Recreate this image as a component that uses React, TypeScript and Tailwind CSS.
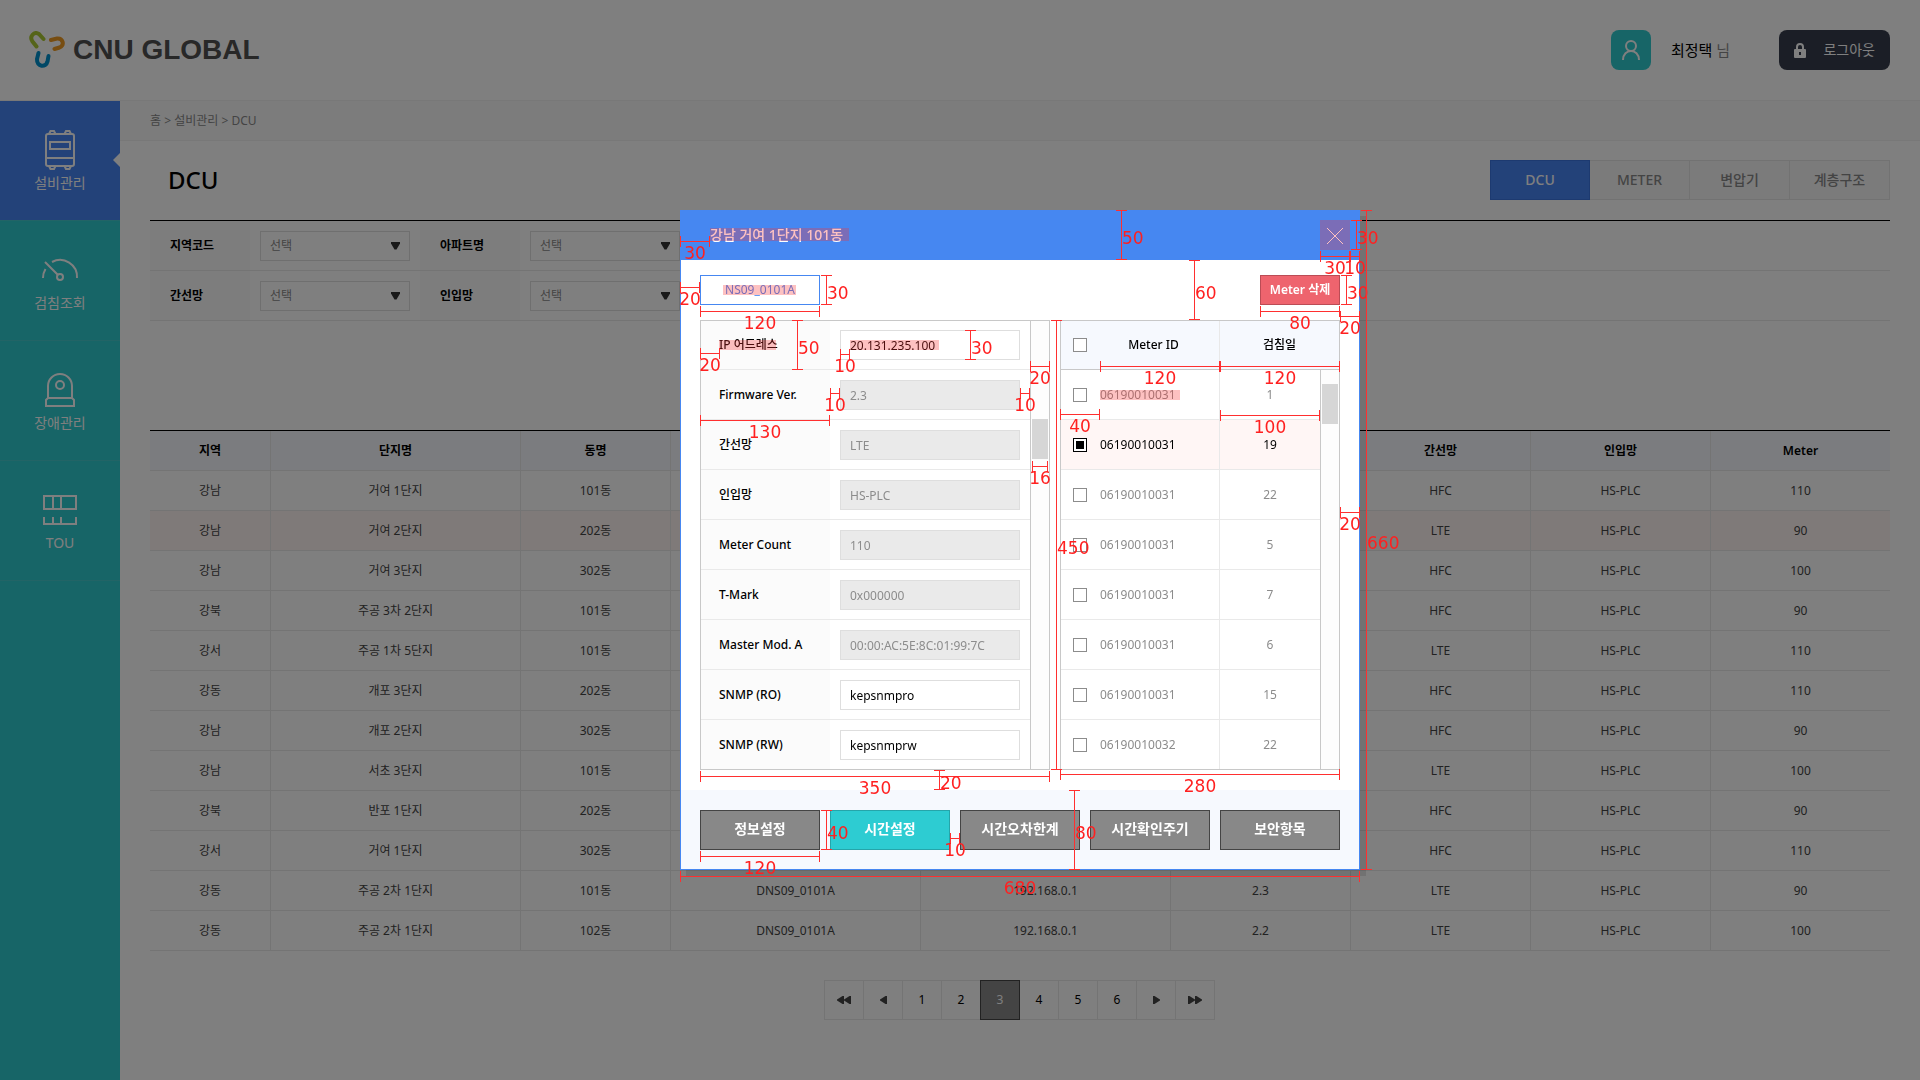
import React from 'react';

const menu = [
  { label: '설비관리', icon: 'cabinet', active: true },
  { label: '검침조회', icon: 'gauge', active: false },
  { label: '장애관리', icon: 'alarm', active: false },
  { label: 'TOU', icon: 'tou', active: false },
];

const tabs = ['DCU', 'METER', '변압기', '계층구조'];

const filterRows = [
  ['지역코드', '아파트명'],
  ['간선망', '인입망'],
];

const columns = ['지역', '단지명', '동명', 'DCU ID', 'IP 어드레스', 'Firmware Ver.', '간선망', '인입망', 'Meter'];

const rows = [
  ['강남', '거여 1단지', '101동', 'DNS09_0101A', '192.168.0.1', '2.3', 'HFC', 'HS-PLC', '110'],
  ['강남', '거여 2단지', '202동', 'DNS09_0101A', '192.168.0.1', '2.3', 'LTE', 'HS-PLC', '90'],
  ['강남', '거여 3단지', '302동', 'DNS09_0101A', '192.168.0.1', '2.3', 'HFC', 'HS-PLC', '100'],
  ['강북', '주공 3차 2단지', '101동', 'DNS09_0101A', '192.168.0.1', '2.3', 'HFC', 'HS-PLC', '90'],
  ['강서', '주공 1차 5단지', '101동', 'DNS09_0101A', '192.168.0.1', '2.3', 'LTE', 'HS-PLC', '110'],
  ['강동', '개포 3단지', '202동', 'DNS09_0101A', '192.168.0.1', '2.3', 'HFC', 'HS-PLC', '110'],
  ['강남', '개포 2단지', '302동', 'DNS09_0101A', '192.168.0.1', '2.3', 'HFC', 'HS-PLC', '90'],
  ['강남', '서초 3단지', '101동', 'DNS09_0101A', '192.168.0.1', '2.3', 'LTE', 'HS-PLC', '100'],
  ['강북', '반포 1단지', '202동', 'DNS09_0101A', '192.168.0.1', '2.3', 'HFC', 'HS-PLC', '90'],
  ['강서', '거여 1단지', '302동', 'DNS09_0101A', '192.168.0.1', '2.3', 'HFC', 'HS-PLC', '110'],
  ['강동', '주공 2차 1단지', '101동', 'DNS09_0101A', '192.168.0.1', '2.3', 'LTE', 'HS-PLC', '90'],
  ['강동', '주공 2차 1단지', '102동', 'DNS09_0101A', '192.168.0.1', '2.2', 'LTE', 'HS-PLC', '100'],
];

const fields = [
  { label: 'IP 어드레스', value: '20.131.235.100', disabled: false },
  { label: 'Firmware Ver.', value: '2.3', disabled: true },
  { label: '간선망', value: 'LTE', disabled: true },
  { label: '인입망', value: 'HS-PLC', disabled: true },
  { label: 'Meter Count', value: '110', disabled: true },
  { label: 'T-Mark', value: '0x000000', disabled: true },
  { label: 'Master Mod. A', value: '00:00:AC:5E:8C:01:99:7C', disabled: true },
  { label: 'SNMP (RO)', value: 'kepsnmpro', disabled: false },
  { label: 'SNMP (RW)', value: 'kepsnmprw', disabled: false },
];

const meters = [
  ['06190010031', '1'],
  ['06190010031', '19'],
  ['06190010031', '22'],
  ['06190010031', '5'],
  ['06190010031', '7'],
  ['06190010031', '6'],
  ['06190010031', '15'],
  ['06190010032', '22'],
];

const actions = ['정보설정', '시간설정', '시간오차한계', '시간확인주기', '보안항목'];

// Dimension lines, measured from the dialog's top left corner: [x, y, length]
const horizontal = [
  [0, 31, 30], [0, 77, 20], [20, 101, 120], [20, 143, 20], [160, 144, 10], [350, 156, 20],
  [150, 183, 10], [340, 183, 10], [20, 210, 130], [352, 256, 16], [640, 46, 30], [670, 46, 10],
  [580, 101, 80], [660, 106, 20], [420, 156, 120], [540, 156, 120], [380, 204, 40], [540, 205, 100],
  [660, 302, 20], [380, 564, 280], [20, 566, 350], [20, 646, 120], [270, 628, 10], [0, 666, 680],
];
const vertical = [
  [146, 65, 30], [117, 110, 50], [290, 120, 30], [376, 110, 450], [441, 0, 50], [514, 50, 60],
  [676, 10, 30], [666, 65, 30], [686, 0, 660], [259, 560, 20], [146, 600, 40], [394, 580, 80],
];
// Highlighted areas: [x, y, width, height]
const marks = [
  [30, 18, 139, 13], [43, 75, 73, 10], [39, 130, 57, 10], [170, 130, 89, 10], [420, 180, 80, 10], [640, 10, 30, 30],
];

function Logo() {
  return (
    <a href="#" className="flex items-center gap-2" aria-label="CNU GLOBAL">
      <svg width="36" height="38" viewBox="0 0 36 38" fill="none" strokeWidth="4" strokeLinecap="round" aria-hidden="true">
        <path d="M7.500 15.500 3.500 10.500C0 5.500 5 0 10 3l4.500 5" stroke="#abc832" />
        <path d="m22 9 6-1.500c6-.5 8 6.500 2.500 9l-5 1.500" stroke="#ef9a22" />
        <path d="m9.500 22-1.500 6c-.5 8 9 9 10.500 2.500L19.500 25" stroke="#0090cc" />
      </svg>
      <span className="font-['Liberation_Sans',sans-serif] text-[28px] leading-8 font-bold text-[#505050]">CNU GLOBAL</span>
    </a>
  );
}

function MenuIcon({ name }: { name: string }) {
  return (
    <svg width="40" height="40" viewBox="0 0 40 40" fill="none" stroke="currentColor" strokeWidth="2" aria-hidden="true">
      {name === 'cabinet' && (
        <>
          <rect x="6" y="4" width="28" height="32" rx="2" />
          <path d="M10 12h20v7H10zM6 28h28M9 4l1.500-3h3.500l1.500 3M24.500 4 26 1h3.500L31 4M9 36l1.500 3h3.500l1.500-3M24.500 36l1.500 3h3.500l1.500-3" />
        </>
      )}
      {name === 'gauge' && (
        <>
          <circle cx="20" cy="27" r="3" />
          <path d="M5 12l13 13M12 12a17 17 0 0 1 25 16M3 28a17 17 0 0 1 2.500-9" />
        </>
      )}
      {name === 'alarm' && (
        <>
          <circle cx="20" cy="15" r="4" />
          <path d="M8 28V16a12 12 0 0 1 24 0v12M8 28h24l2 2v6H6v-6z" />
        </>
      )}
      {name === 'tou' && <path d="M4 6h32v13H4zM13 6v13M21 6v13M4 27v7h32v-7M13 27v7M21 27v7" />}
    </svg>
  );
}

function Arrows({ count, back }: { count: number; back?: boolean }) {
  return (
    <span className={back ? 'flex rotate-180' : 'flex'}>
      {Array.from({ length: count }, (_, i) => (
        <svg key={i} width="7" height="8" viewBox="0 0 7 8" fill="#444" aria-hidden="true">
          <path d="M0 0h1.500L7 3.500v1L1.500 8H0z" />
        </svg>
      ))}
    </span>
  );
}

function Page() {
  return (
    <div className="flex min-h-screen flex-col bg-white">
      <header className="flex h-[101px] items-center justify-between border-b border-[#f0f0f0] pr-[30px] pl-[29px]">
        <Logo />
        <div className="flex items-center">
          <span className="flex size-10 items-center justify-center rounded-lg bg-[#2ecace]">
            <svg width="20" height="20" viewBox="0 0 20 20" fill="none" stroke="white" strokeWidth="2" aria-hidden="true">
              <circle cx="10" cy="6" r="5" />
              <path d="M2 20c0-12 16-12 16 0" />
            </svg>
          </span>
          <span className="ml-5 text-[15px] text-black">
            최정택 <span className="text-[#888]">님</span>
          </span>
          <button type="button" className="ml-[49px] flex h-10 w-[111px] items-center justify-between rounded-lg bg-[#363c4c] px-[15px] text-sm text-white">
            <svg width="12" height="15" viewBox="0 0 12 15" aria-hidden="true">
              <path d="M3 7V4a3 3 0 0 1 6 0v3" fill="none" stroke="white" strokeWidth="2" />
              <path d="M1 6h10a1 1 0 0 1 1 1v7a1 1 0 0 1-1 1H1a1 1 0 0 1-1-1V7a1 1 0 0 1 1-1zm4 3v3h2V9z" fill="white" fillRule="evenodd" />
            </svg>
            로그아웃
          </button>
        </div>
      </header>
      <div className="flex flex-1">
        <nav className="w-[120px] shrink-0 bg-[#2ecace] text-white">
          {menu.map((item) => (
            <a
              key={item.label}
              href="#"
              className={
                'relative flex h-[120px] flex-col items-center border-b border-[#45c8cc] pt-[29px] ' +
                (item.active ? 'bg-[#4684f2]' : '')
              }
            >
              <MenuIcon name={item.icon} />
              <span className="mt-px text-sm leading-6">{item.label}</span>
              {item.active && (
                <svg className="absolute top-[52px] right-0" width="7" height="14" viewBox="0 0 7 14" aria-hidden="true">
                  <path d="M7 0v14L0 7z" fill="white" />
                </svg>
              )}
            </a>
          ))}
        </nav>
        <div className="min-w-0 flex-1">
          <div className="flex h-10 items-center border-b border-[#f0f0f0] bg-[#f9f9f9] px-[30px] text-xs text-[#888]">
            홈 &gt; 설비관리 &gt; DCU
          </div>
          <main className="px-[30px]">
            <div className="mb-px flex h-[78px] items-center justify-between pl-[18px]">
              <h1 className="text-2xl font-medium text-black">DCU</h1>
              <div className="grid w-[400px] grid-cols-4">
                {tabs.map((t, i) => (
                  <button
                    key={t}
                    type="button"
                    className={
                      'h-10 border-y border-r text-sm font-medium ' +
                      (i === 0 ? 'border-l border-[#3a74e0] bg-[#4684f2] text-white' : 'border-[#e4e4e4] bg-[#f7f7f7] text-[#888]')
                    }
                  >
                    {t}
                  </button>
                ))}
              </div>
            </div>
            <div className="border-t border-black">
              {filterRows.map((row) => (
                <div key={row[0]} className="flex h-[50px] border-b border-[#e9e9e9]">
                  {row.map((label) => (
                    <div key={label} className="flex w-[270px] items-center">
                      <label htmlFor={label} className="flex h-full w-[100px] items-center bg-[#fbfbfb] pl-5 text-xs font-semibold text-black">
                        {label}
                      </label>
                      <div className="relative ml-[10px]">
                        <select id={label} className="block h-[30px] w-[150px] appearance-none border border-[#dedede] bg-white px-[9px] text-xs text-[#888]">
                          <option>선택</option>
                        </select>
                        <svg className="pointer-events-none absolute top-[11px] right-[10px]" width="9" height="8" viewBox="0 0 9 8" aria-hidden="true">
                          <path d="M0 0h9v1.500L5.500 7.500h-2L0 1.500z" fill="#333" />
                        </svg>
                      </div>
                    </div>
                  ))}
                </div>
              ))}
            </div>
            <table className="mt-[109px] w-full table-fixed border-separate border-spacing-0 border-t border-black text-center text-xs text-[#444]">
              <colgroup>
                <col className="w-[120px]" />
                <col className="w-[250px]" />
                <col className="w-[150px]" />
                <col className="w-[250px]" />
                <col className="w-[250px]" />
                <col className="w-[180px]" />
                <col className="w-[180px]" />
                <col className="w-[180px]" />
                <col className="w-[180px]" />
              </colgroup>
              <thead>
                <tr className="bg-[#f6f9fe] text-black">
                  {columns.map((c) => (
                    <th key={c} className="h-10 border-b border-l border-[#e9e9e9] p-0 font-semibold first:border-l-0">
                      {c}
                    </th>
                  ))}
                </tr>
              </thead>
              <tbody>
                {rows.map((r, i) => (
                  <tr key={i} className={i === 1 ? 'bg-[#fff5f3]' : ''}>
                    {r.map((c, j) => (
                      <td key={j} className="h-10 border-b border-l border-[#e9e9e9] p-0 first:border-l-0">
                        {c}
                      </td>
                    ))}
                  </tr>
                ))}
              </tbody>
            </table>
            <div className="mt-[29px] flex justify-center text-xs text-black">
              {['first', 'prev', '1', '2', '3', '4', '5', '6', 'next', 'last'].map((p) => (
                <button
                  key={p}
                  type="button"
                  aria-label={p}
                  className={
                    '-ml-px flex size-10 items-center justify-center border ' +
                    (p === '3' ? 'z-10 border-[#444] bg-[#888] text-white' : 'border-[#e9e9e9]')
                  }
                >
                  {p === 'first' && <Arrows count={2} back />}
                  {p === 'prev' && <Arrows count={1} back />}
                  {p === 'next' && <Arrows count={1} />}
                  {p === 'last' && <Arrows count={2} />}
                  {p.length === 1 && p}
                </button>
              ))}
            </div>
          </main>
        </div>
      </div>
    </div>
  );
}

const checkbox =
  'block size-[14px] appearance-none border border-[#8c8c8c] bg-white checked:border-black checked:bg-black checked:shadow-[inset_0_0_0_2px_white]';

function Fields() {
  return (
    <div className="flex w-[350px] border border-[#c8c8c8]">
      <div className="flex-1">
        {fields.map((f, i) => (
          <div key={f.label} className="flex border-b border-[#e9e9e9] last:border-b-0">
            <label htmlFor={f.label} className="flex w-[129px] items-center bg-[#fbfbfb] pl-[18px] text-xs font-medium text-black">
              {f.label}
            </label>
            <div className={'flex-1 px-[10px] pb-[9px] ' + (i === 0 ? 'pt-[9px]' : 'pt-[10px]')}>
              <input
                id={f.label}
                type="text"
                defaultValue={f.value}
                disabled={f.disabled}
                className="block h-[30px] w-full border border-[#dedede] bg-white px-[9px] text-xs text-black disabled:bg-[#eaeaea] disabled:text-[#8c8c8c]"
              />
            </div>
          </div>
        ))}
      </div>
      <div className="w-[19px] border-l border-[#c8c8c8] bg-[#fdfdfd] pt-[98px] pl-px">
        <div className="h-10 w-4 bg-[#d6d6d6]" />
      </div>
    </div>
  );
}

function Meters() {
  return (
    <table className="w-[280px] table-fixed border-separate border-spacing-0 border border-[#c8c8c8] text-xs text-[#8c8c8c]">
      <colgroup>
        <col className="w-[39px]" />
        <col className="w-[120px]" />
        <col className="w-[100px]" />
        <col className="w-[19px]" />
      </colgroup>
      <thead>
        <tr className="bg-[#f6f9fe] text-black">
          <th className="h-[49px] border-b border-[#c8c8c8] p-0 pl-3">
            <input type="checkbox" aria-label="전체 선택" className={checkbox} />
          </th>
          <th className="border-r border-b border-r-[#e9e9e9] border-b-[#c8c8c8] p-0 pr-3 font-medium">Meter ID</th>
          <th colSpan={2} className="border-b border-[#c8c8c8] p-0 font-medium">
            검침일
          </th>
        </tr>
      </thead>
      <tbody>
        {meters.map(([id, day], i) => {
          const line = i === meters.length - 1 ? 'h-[49px] border-[#e9e9e9] p-0 ' : 'h-[50px] border-b border-[#e9e9e9] p-0 ';
          return (
            <tr key={i} className={i === 1 ? 'bg-[#fff6f5] text-black' : ''}>
              <td className={line + 'pl-3'}>
                <input id={'meter' + i} type="checkbox" defaultChecked={i === 1} className={checkbox} />
              </td>
              <td className={line + 'border-r'}>
                <label htmlFor={'meter' + i}>{id}</label>
              </td>
              <td className={line + 'text-center'}>{day}</td>
              {i === 0 && (
                <td rowSpan={meters.length} className="border-l border-[#c8c8c8] bg-[#fdfdfd] p-0 pt-[14px] pl-px align-top">
                  <div className="h-10 w-4 bg-[#d6d6d6]" />
                </td>
              )}
            </tr>
          );
        })}
      </tbody>
    </table>
  );
}

function Dimensions() {
  return (
    <div className="pointer-events-none absolute -top-px -left-px size-0 font-['DejaVu_Sans',sans-serif] text-[17px] leading-3 text-[#ff2020]">
      {marks.map(([x, y, w, h], i) => (
        <div key={i} className="absolute bg-[#fa3232]/30" style={{ left: x, top: y, width: w, height: h }} />
      ))}
      {horizontal.map(([x, y, len], i) => (
        <div key={i} className="absolute flex h-[11px] items-center justify-center border-x border-[#ff2f2f]" style={{ left: x, top: y - 5, width: len }}>
          <div className="h-px flex-1 bg-[#ff2f2f]" />
          <span className="absolute top-[11px]">{len}</span>
        </div>
      ))}
      {vertical.map(([x, y, len], i) => (
        <div key={i} className="absolute flex w-[11px] justify-center border-y border-[#ff2f2f]" style={{ left: x - 5, top: y, height: len }}>
          <div className="w-px bg-[#ff2f2f]" />
          <span className="absolute top-1/2 left-[6px] -mt-[3px]">{len}</span>
        </div>
      ))}
    </div>
  );
}

function Dialog() {
  return (
    <div
      role="dialog"
      aria-modal="true"
      aria-labelledby="dialog-title"
      className="relative w-[680px] border border-[#4687f1] bg-white shadow-[6px_6px_0_rgba(0,0,0,0.1)]"
    >
      <div className="flex h-[49px] items-center justify-between bg-[#4687f1] pr-[9px] pl-[29px] text-white">
        <h2 id="dialog-title" className="pb-0.5 text-sm font-medium">
          강남 거여 1단지 101동
        </h2>
        <button type="button" aria-label="닫기" className="flex size-[30px] items-center justify-center">
          <svg width="16" height="16" viewBox="0 0 16 16" stroke="white" aria-hidden="true">
            <path d="M0 0l16 16M16 0L0 16" />
          </svg>
        </button>
      </div>
      <div className="flex h-[60px] items-center justify-between px-[19px]">
        <button type="button" className="h-[30px] w-[120px] border border-[#4687f1] text-xs text-[#4687f1]">
          NS09_0101A
        </button>
        <button type="button" className="h-[30px] w-[80px] border border-[#bb4c55] bg-[#ee646e] text-xs font-semibold whitespace-nowrap text-white">
          Meter 삭제
        </button>
      </div>
      <div className="flex justify-between px-[19px] pb-5">
        <Fields />
        <Meters />
      </div>
      <div className="grid grid-cols-5 gap-[10px] bg-[#f6f9fe] px-[19px] pt-5 pb-[19px]">
        {actions.map((a) => (
          <button
            key={a}
            type="button"
            className={
              'h-10 border pb-0.5 text-sm font-semibold text-white ' +
              (a === '시간설정' ? 'border-[#25a5aa] bg-[#2dccd2]' : 'border-[#444] bg-[#888]')
            }
          >
            {a}
          </button>
        ))}
      </div>
      <Dimensions />
    </div>
  );
}

export default function App() {
  return (
    <div className="font-['Noto_Sans','Noto_Sans_CJK_KR',sans-serif]">
      <Page />
      <div className="fixed inset-0 z-20 flex items-center justify-center bg-black/50 pl-[120px]">
        <Dialog />
      </div>
    </div>
  );
}
